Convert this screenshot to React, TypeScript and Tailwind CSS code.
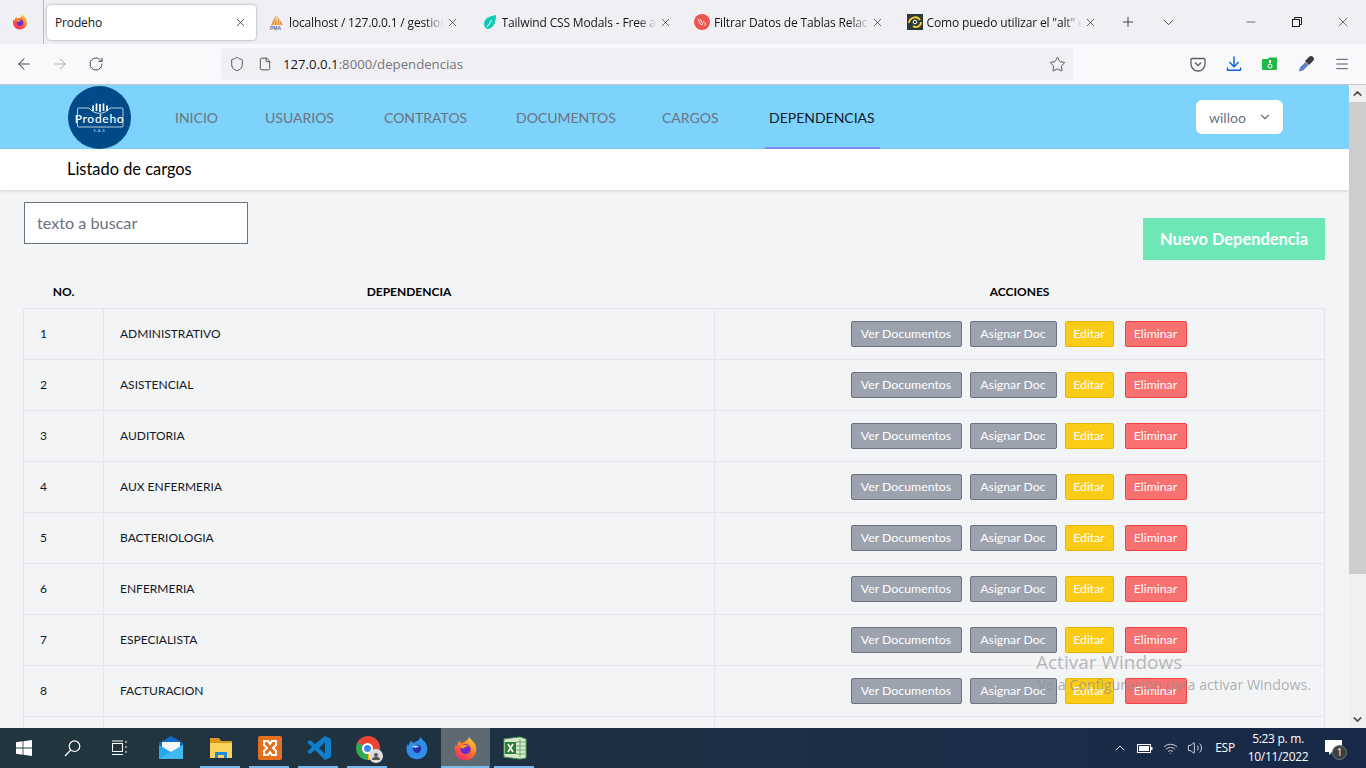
import React from "react";
import { ArrowLeft, ArrowRight, RotateCw, Shield, File, Star, X, Plus, ChevronDown, ChevronUp, Minus, Menu, Wifi, Volume2 } from "lucide-react";

const rows = ["ADMINISTRATIVO", "ASISTENCIAL", "AUDITORIA", "AUX ENFERMERIA", "BACTERIOLOGIA", "ENFERMERIA", "ESPECIALISTA", "FACTURACION", "FARMACIA"];
const nav = [
  { label: "INICIO", w: "w-[90px]" },
  { label: "USUARIOS", w: "w-[119px]" },
  { label: "CONTRATOS", w: "w-[132px]" },
  { label: "DOCUMENTOS", w: "w-[146px]" },
  { label: "CARGOS", w: "w-[107px]" },
];

function FirefoxIcon({ size = 16, id = "ffa" }: { size?: number; id?: string }) {
  return (
    <svg width={size} height={size} viewBox="0 0 32 32">
      <defs>
        <linearGradient id={id} x1="0.8" y1="0" x2="0.2" y2="1">
          <stop offset="0" stopColor="#ffd43a" />
          <stop offset="0.45" stopColor="#ff7a2b" />
          <stop offset="1" stopColor="#f5226c" />
        </linearGradient>
      </defs>
      <path d="M21 1c1 4 5 5 7 9 3 6 2 13-2 17-5 5-14 5-19 1C2 24 1 17 3 11c.5 1 1 2 2 2 0-3 2-6 4-7 0 2 1 3 2 3 3-1 8-3 10-8z" fill={`url(#${id})`} />
      <circle cx="16" cy="17" r="6.5" fill="#6a2bd0" />
      <path d="M9 13c3-2 8-2 11 0-3 0-5 1-6 3-2 0-4-1-5-3z" fill="#ff9a2b" />
    </svg>
  );
}

function Tab({ icon, title }: { icon: React.ReactNode; title: string }) {
  return (
    <div className="w-[212.5px] h-[44px] flex items-center pl-[10px] shrink-0">
      <span className="w-[16px] h-[16px] flex items-center justify-center shrink-0">{icon}</span>
      <span className="ml-[4px] w-[155px] pt-[1px] overflow-hidden whitespace-nowrap text-[12px] tracking-[-0.15px] text-[#15141a] [mask-image:linear-gradient(to_right,black_88%,transparent)]">{title}</span>
      <X className="ml-[2px] shrink-0 text-[#2b2a33]" size={13} strokeWidth={1.3} />
    </div>
  );
}

function Btn({ label, w, cls }: { label: string; w: string; cls: string }) {
  return <button className={`h-[26px] ${w} border rounded-[2px] pt-[1px] text-[12.3px] text-white flex items-center justify-center shrink-0 ${cls}`}>{label}</button>;
}

function TaskApp({ children, on, active }: { children: React.ReactNode; on?: boolean; active?: boolean }) {
  return (
    <div className={`relative h-[40px] w-[49px] flex items-center justify-center ${active ? "bg-[#5d6a72]" : ""}`}>
      {children}
      {on && <span className={`absolute bottom-0 h-[2px] bg-[#76b9ed] ${active ? "left-0 right-[1px]" : "left-[4px] right-[5px]"}`} />}
    </div>
  );
}

export default function App() {
  return (
    <div className="w-[1366px] h-[768px] overflow-hidden flex flex-col bg-[#f3f4f6] font-['Open_Sans','Noto_Sans',sans-serif]">
      {/* tab strip */}
      <div className="h-[44px] bg-[#f0f0f4] flex items-center shrink-0">
        <div className="w-[44px] h-[44px] border-r border-[#b8b8bc] flex items-center justify-center shrink-0 pr-[4px]">
          <FirefoxIcon />
        </div>
        <div className="w-[215px] h-[44px] pl-[3px] flex items-center shrink-0">
          <div className="w-[209px] h-[35px] bg-white rounded-[4px] shadow-[0_0_3px_rgba(0,0,0,0.35)] flex items-center pl-[8px] pr-[9px] justify-between">
            <span className="text-[12px] tracking-[-0.15px] pt-[1px] text-[#15141a]">Prodeho</span>
            <X size={13} strokeWidth={1.4} className="text-[#2b2a33]" />
          </div>
        </div>
        <Tab title="localhost / 127.0.0.1 / gestion_documental" icon={
          <svg width="16" height="16" viewBox="0 0 16 16"><path d="M2 11 7 1l1 10zM8.5 11V2L14 11z" fill="#e8902b" /><path d="M5 11 7 3M11 11 9.5 4" stroke="#fff" strokeWidth="0.5" /><text x="1" y="15.5" fontSize="5" fontWeight="700" fill="#5a6b9a" fontFamily="Liberation Sans">PMA</text></svg>
        } />
        <Tab title="Tailwind CSS Modals - Free and Premium" icon={
          <svg width="16" height="16" viewBox="0 0 16 16"><path d="M14 1C8 2 2 4 2 10c0 2 1 4 3 5 6 0 9-6 9-14z" fill="#14c8b8" /><path d="M5 13 10 6" stroke="#fff" strokeWidth="1" /></svg>
        } />
        <Tab title="Filtrar Datos de Tablas Relacionadas" icon={
          <svg width="16" height="16" viewBox="0 0 16 16"><circle cx="8" cy="8" r="8" fill="#f0544f" /><path d="M4 5l3 6 2-1-3-5m3 2 3 3-2 2" fill="none" stroke="#fff" strokeWidth="0.8" /></svg>
        } />
        <Tab title={'Como puedo utilizar el "alt" en una'} icon={
          <svg width="16" height="16" viewBox="0 0 16 16"><rect width="16" height="16" fill="#2d3a33" /><path d="M2 9a6 6 0 0 1 11-3M14 8a5 5 0 0 1-8 4" fill="none" stroke="#f5d13a" strokeWidth="1.8" /><circle cx="8" cy="8" r="1.8" fill="none" stroke="#fff" strokeWidth="1" /></svg>
        } />
        <div className="w-[38px] flex justify-center shrink-0"><Plus size={16} strokeWidth={1.3} className="text-[#2b2a33]" /></div>
        <div className="w-[42px] flex justify-center shrink-0"><ChevronDown size={17} strokeWidth={1.2} className="text-[#2b2a33]" /></div>
        <div className="flex-1" />
        <div className="flex items-center text-[#1a1a1a] shrink-0">
          <div className="w-[47px] flex justify-center"><Minus size={14} strokeWidth={1} /></div>
          <div className="w-[46px] flex justify-center">
            <svg width="12" height="12" viewBox="0 0 12 12" fill="none" stroke="#1a1a1a"><rect x="1.5" y="3.5" width="7" height="7" /><path d="M3.5 3.5v-2h7v7h-2" /></svg>
          </div>
          <div className="w-[46px] flex justify-center"><X size={16} strokeWidth={0.9} /></div>
        </div>
      </div>

      {/* toolbar */}
      <div className="h-[41px] bg-[#f9f9fb] border-b border-[#c4c4c8] flex items-center shrink-0">
        <div className="w-[221px] flex items-center pl-[15px] shrink-0">
          <ArrowLeft size={18} strokeWidth={1.4} className="text-[#4a4a50]" />
          <ArrowRight size={18} strokeWidth={1.4} className="ml-[18px] text-[#b4b4b8]" />
          <RotateCw size={16} strokeWidth={1.5} className="ml-[19px] text-[#4a4a50]" />
        </div>
        <div className="w-[852px] h-[32px] bg-[#f0f0f4] rounded-[4px] flex items-center pl-[8px] pr-[7px] shrink-0">
          <Shield size={16} strokeWidth={1.4} className="text-[#4a4a50]" />
          <File size={14} strokeWidth={1.6} className="ml-[13px] text-[#4a4a50]" />
          <span className="ml-[11px] pt-[1px] text-[13.2px] text-[#15141a]">127.0.0.1<span className="text-[#74747c]">:8000/dependencias</span></span>
          <div className="flex-1" />
          <Star size={17} strokeWidth={1.3} className="text-[#4a4a50]" />
        </div>
        <div className="flex-1 flex items-center pl-[117px] gap-[20px] text-[#4a4a50]">
          <svg width="16" height="16" viewBox="0 0 16 16" fill="none" stroke="#5b5b66" strokeWidth="1.3"><path d="M2 2.5h12a1 1 0 0 1 1 1V8a7 7 0 0 1-14 0V3.5a1 1 0 0 1 1-1z" /><path d="M5 6.5l3 3 3-3" /></svg>
          <svg width="16" height="16" viewBox="0 0 16 16" fill="none" stroke="#0a64d8" strokeWidth="1.4" strokeLinecap="round" strokeLinejoin="round"><path d="M8 1v9.5M3.8 6.5 8 10.7l4.2-4.2M1.5 12v2.3h13V12" /></svg>
          <svg width="16" height="16" viewBox="0 0 16 16"><path d="M0 4a1 1 0 0 1 1-1h5l1-1.5h7.500a1 1 0 0 1 .5 1V13a1 1 0 0 1-1 1H1a1 1 0 0 1-1-1z" fill="#22b845" /><rect x="7" y="4" width="2" height="3" fill="#fff" /><circle cx="8" cy="10" r="2" fill="none" stroke="#fff" /></svg>
          <svg width="16" height="16" viewBox="0 0 16 16"><path d="M1 15.500l1-4 5.500-5.500 3 3-5.500 5.500z" fill="#5b80c8" /><path d="M7 5l4-4a2.500 2.500 0 0 1 4 4l-4 4z" fill="#3a3a3e" /></svg>
          <Menu size={16} strokeWidth={1.4} className="text-[#4a4a50]" />
        </div>
      </div>

      {/* page and scrollbar */}
      <div className="relative flex-1 flex min-h-0">
        <main className="flex-1 min-w-0 overflow-hidden font-['Lato','Noto_Sans',sans-serif]">
          <nav className="h-[64px] bg-[#7dd3fc] flex items-center pl-[68px] pr-[66px]">
            <div className="relative w-[63px] h-[63px] rounded-full bg-[#004a87] shrink-0 mt-[1px]">
              <svg width="63" height="63" viewBox="0 0 63 63" fill="none" stroke="#fff">
                <path d="M25 25v-5.500M28.500 25v-7.500M32 26v-8M35.500 25v-7.500M39 25v-5.500" strokeWidth="1.700" />
                <path d="M21 22c5 7 16 7 21 0" strokeWidth="0.8" />
                <path d="M21 22H10.500a1 1 0 0 0-1 1v17a1 1 0 0 0 1 1H54a1 1 0 0 0 1-1V23a1 1 0 0 0-1-1H42" strokeWidth="0.8" opacity="0.9" />
              </svg>
              <span className="absolute left-0 right-0 top-[25px] text-center text-white text-[12px] font-medium leading-[16px] tracking-[0.7px]">Prodeho</span>
              <span className="absolute left-0 right-0 top-[43px] text-center text-white text-[3px] leading-[4px] tracking-[1px]">S.A.S</span>
            </div>
            <div className="flex h-full ml-[40px]">
              {nav.map((n) => (
                <a key={n.label} className={`${n.w} h-full pl-[4px] pt-[3px] border-b-2 border-transparent flex items-center text-[14px] text-[#6b7280]`}>{n.label}</a>
              ))}
              <a className="w-[115px] h-full pl-[4px] pt-[3px] flex items-center text-[14px] text-[#111827] border-b-2 border-[#818cf8]">DEPENDENCIAS</a>
            </div>
            <div className="flex-1" />
            <div className="w-[87px] h-[34px] bg-white rounded-[6px] flex items-center pl-[13px] text-[14px] text-[#6b7280]">
              willoo
              <ChevronDown size={14} strokeWidth={2} className="ml-[12px]" />
            </div>
          </nav>
          <header className="h-[41px] bg-white shadow-[0_1px_3px_rgba(0,0,0,0.15)] flex items-center pl-[67px] text-[16.4px] text-black relative">
            Listado de cargos
          </header>
          <div className="pl-[23px] pt-[12px]">
            <div className="flex justify-between ml-[1px] w-[1301px]">
              <div className="w-[224px] h-[42px] bg-white border border-[#6b7280] flex items-center pl-[12px] text-[16.2px] text-[#6b7280]">texto a buscar</div>
              <button className="mt-[16px] w-[182px] h-[42px] bg-[#6ee7b7] text-white font-bold text-[16.4px] flex items-center justify-center">Nuevo Dependencia</button>
            </div>
            <table className="mt-[20px] w-[1302px] table-fixed border-collapse text-[12px]">
              <thead>
                <tr className="h-[28px] font-bold text-black">
                  <th className="w-[80px] pb-[4px]">NO.</th>
                  <th className="w-[611px] pb-[4px]">DEPENDENCIA</th>
                  <th className="pb-[4px]">ACCIONES</th>
                </tr>
              </thead>
              <tbody>
                {rows.map((r, i) => (
                  <tr key={r} className="h-[51px] text-[#111827]">
                    <td className="border border-[#e5e7eb] pl-[16px]">{i + 1}</td>
                    <td className="border border-[#e5e7eb] pl-[16px]">{r}</td>
                    <td className="border border-[#e5e7eb]">
                      <div className="flex justify-center pr-[2px]">
                        <Btn label="Ver Documentos" w="w-[111px]" cls="bg-[#9ca3af] border-[#6b7280]" />
                        <Btn label="Asignar Doc" w="w-[87px] ml-[8px]" cls="bg-[#9ca3af] border-[#6b7280]" />
                        <Btn label="Editar" w="w-[49px] ml-[8px]" cls="bg-[#facc15] border-[#eab308]" />
                        <Btn label="Eliminar" w="w-[62px] ml-[11px]" cls="bg-[#f87171] border-[#ef4444]" />
                      </div>
                    </td>
                  </tr>
                ))}
              </tbody>
            </table>
          </div>
        </main>
        <div className="w-[17px] bg-[#f0f0f0] flex flex-col items-center shrink-0">
          <div className="h-[17px] flex items-center justify-center"><ChevronUp size={13} strokeWidth={3} className="text-[#505050]" /></div>
          <div className="w-full h-[472px] bg-[#cdcdcd]" />
          <div className="flex-1" />
          <div className="h-[17px] flex items-center justify-center"><ChevronDown size={13} strokeWidth={3} className="text-[#505050]" /></div>
        </div>
        <div className="absolute left-[1036px] top-[565px] text-[#9a9a9a]/70 text-[19px] leading-[24px] font-['Open_Sans',sans-serif] pointer-events-none whitespace-nowrap">Activar Windows</div>
        <div className="absolute right-[55px] top-[590px] text-[#8f8f8f]/70 text-[14.2px] leading-[20px] font-['Open_Sans',sans-serif] pointer-events-none whitespace-nowrap">Ve a Configuración para activar Windows.</div>
      </div>

      {/* taskbar */}
      <div className="h-[40px] bg-linear-to-r from-[#22363f] to-[#182848] flex items-center shrink-0 text-white">
        <div className="w-[48px] flex justify-center">
          <svg width="16" height="16" viewBox="0 0 16 16" fill="#fff"><path d="M0 2.2 6.6 1.3v6.3H0zM7.4 1.2 16 0v7.6H7.4zM0 8.4h6.6v6.3L0 13.8zM7.4 8.4H16V16l-8.6-1.2z" /></svg>
        </div>
        <div className="w-[48px] flex justify-center">
          <svg width="17" height="17" viewBox="0 0 17 17" fill="none" stroke="#fff" strokeWidth="1.2"><circle cx="10.5" cy="6.2" r="5.3" /><path d="M6.8 10 1 16" /></svg>
        </div>
        <div className="w-[48px] flex justify-center">
          <svg width="18" height="16" viewBox="0 0 18 16" fill="none" stroke="#fff"><rect x="1.5" y="3.5" width="10" height="8" /><path d="M1 1h11M1 14.5h11M15 1v2M15 6v2M15 11v2" /></svg>
        </div>
        <div className="ml-[3px] flex items-center">
          <TaskApp>
            <svg width="24" height="24" viewBox="0 0 24 24" className="-ml-[2px]"><path d="M0 7 12 0l12 7v16H0z" fill="#0f6fc6" /><path d="M3 6h18v6l-9 5-9-5z" fill="#f2f7fb" /><path d="M0 9l12 7 12-7v14H0z" fill="#28a8ea" /><path d="M24 9v14H0z" fill="#50c4f2" opacity="0.6" /></svg>
          </TaskApp>
          <TaskApp on>
            <svg width="24" height="22" viewBox="0 0 24 22"><path d="M1 1h9l2 3h11v4H1z" fill="#d99a1e" /><rect x="1" y="6" width="22" height="15" fill="#fbd25c" /><path d="M6 21v-6h12v6h-3v-3H9v3z" fill="#1f8ad8" /></svg>
          </TaskApp>
          <TaskApp on>
            <svg width="24" height="24" viewBox="0 0 24 24"><rect width="24" height="24" rx="2" fill="#e2701d" /><path d="M6 5h4l2 3 2-3h4v4l-3 3 3 3v4h-4l-2-3-2 3H6v-4l3-3-3-3z" fill="none" stroke="#fff" strokeWidth="2" /></svg>
          </TaskApp>
          <TaskApp on>
            <svg width="24" height="26" viewBox="0 0 24 26"><path d="M18 1 24 4v18l-6 3-10-10-5 4-3-2 5-5-5-5 3-2 5 4z" fill="#0f7ecb" /><path d="M18 7l-6 6 6 6z" fill="#22364a" /></svg>
          </TaskApp>
          <TaskApp on>
            <div className="relative w-[24px] h-[24px]">
              <div className="w-[24px] h-[24px] rounded-full bg-[conic-gradient(#ea4335_0_33%,#fbbc05_33%_50%,#34a853_50%_83%,#ea4335_83%)] flex items-center justify-center">
                <div className="w-[11px] h-[11px] rounded-full bg-[#4285f4] border-2 border-white" />
              </div>
              <div className="absolute -right-[3px] -bottom-[3px] w-[14px] h-[14px] rounded-full bg-[#dcdcdc] flex flex-col items-center justify-center">
                <div className="w-[4px] h-[4px] rounded-full bg-[#555]" />
                <div className="w-[8px] h-[3px] rounded-t-full bg-[#555]" />
              </div>
            </div>
          </TaskApp>
          <TaskApp>
            <svg width="24" height="24" viewBox="0 0 32 32"><path d="M21 1c1 4 5 5 7 9 3 6 2 13-2 17-5 5-14 5-19 1C2 24 1 17 3 11c.5 1 1 2 2 2 0-3 2-6 4-7 0 2 1 3 2 3 3-1 8-3 10-8z" fill="#2f8fe8" /><circle cx="16" cy="17" r="5.5" fill="#2a2fa8" /><path d="M9 14c3-2 7-2 10 0l-5 2z" fill="#9fe0ff" /></svg>
          </TaskApp>
          <TaskApp on active><FirefoxIcon size={25} id="ffb" /></TaskApp>
          <TaskApp on>
            <svg width="24" height="24" viewBox="0 0 24 24"><path d="M1 3 17 1l6 2v19l-6 1-16-2z" fill="#d7e8d2" stroke="#4f9a4a" /><path d="M13 6h9M13 10h9M13 14h9M13 18h9M17 3v18" stroke="#6dab68" /><rect x="2" y="6" width="11" height="12" fill="#2e7d32" /><path d="M5 8l5 8M10 8l-5 8" stroke="#fff" strokeWidth="1.6" /></svg>
          </TaskApp>
        </div>
        <div className="flex-1" />
        <div className="flex items-center shrink-0">
          <ChevronUp size={16} strokeWidth={1.3} />
          <svg width="16" height="9" viewBox="0 0 16 9" className="ml-[9px]"><rect x="0.5" y="0.5" width="13" height="8" fill="none" stroke="#fff" /><rect x="2" y="2" width="10" height="5" fill="#fff" /><rect x="14" y="3" width="1.5" height="3" fill="#fff" /></svg>
          <Wifi size={15} strokeWidth={1.2} className="ml-[10px]" />
          <Volume2 size={16} strokeWidth={1.2} className="ml-[9px]" />
          <span className="ml-[12px] text-[12px] tracking-[-0.2px]">ESP</span>
          <div className="ml-[14px] w-[58px] flex flex-col items-center text-[12px] tracking-[-0.3px] leading-[18px] text-center whitespace-nowrap">
            <span>5:23 p. m.</span>
            <span>10/11/2022</span>
          </div>
          <div className="relative ml-[18px] mr-[24px] w-[17px] h-[16px]">
            <svg width="17" height="16" viewBox="0 0 17 16"><path d="M0 0h17v12H7l-3 3v-3H0z" fill="#fff" /></svg>
            <span className="absolute left-[7px] top-[5px] w-[15px] h-[15px] rounded-full bg-[#3a3f46] border border-[#777] text-[10px] leading-[13px] text-center">1</span>
          </div>
        </div>
      </div>
    </div>
  );
}
